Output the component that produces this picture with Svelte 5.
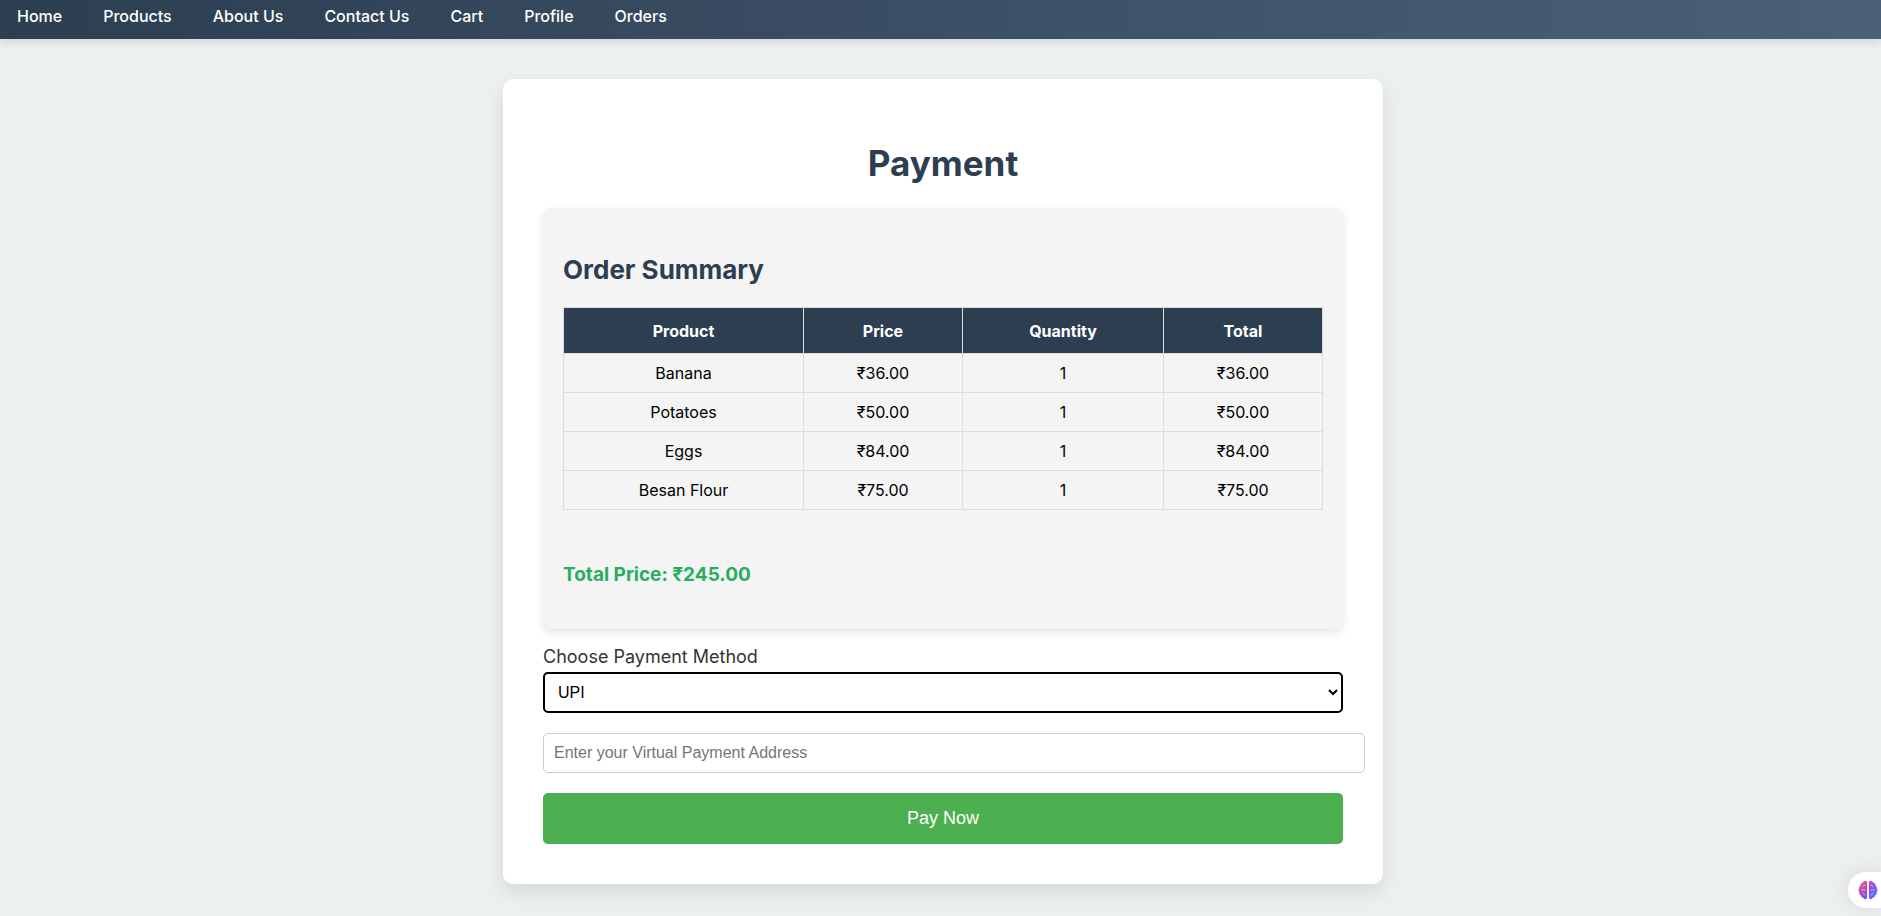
<script>
  const links = ['Home', 'Products', 'About Us', 'Contact Us', 'Cart', 'Profile', 'Orders'];

  const items = [
    { name: 'Banana', price: 36, quantity: 1 },
    { name: 'Potatoes', price: 50, quantity: 1 },
    { name: 'Eggs', price: 84, quantity: 1 },
    { name: 'Besan Flour', price: 75, quantity: 1 }
  ];

  const total = items.reduce((sum, item) => sum + item.price * item.quantity, 0);
  const rupees = (value) => `₹${value.toFixed(2)}`;

  let method = $state('upi');
  let address = $state('');
</script>

<div class="page">
  <nav class="navbar">
    {#each links as link}
      <a href="#{link.toLowerCase().replace(' ', '-')}">{link}</a>
    {/each}
  </nav>

  <main>
    <form class="card" onsubmit={(event) => event.preventDefault()}>
      <h1>Payment</h1>

      <section class="summary">
        <h2>Order Summary</h2>
        <table>
          <colgroup>
            <col class="wide" />
            <col class="narrow" />
            <col class="medium" />
            <col class="narrow" />
          </colgroup>
          <thead>
            <tr><th>Product</th><th>Price</th><th>Quantity</th><th>Total</th></tr>
          </thead>
          <tbody>
            {#each items as item}
              <tr>
                <td>{item.name}</td>
                <td>{rupees(item.price)}</td>
                <td>{item.quantity}</td>
                <td>{rupees(item.price * item.quantity)}</td>
              </tr>
            {/each}
          </tbody>
        </table>
        <h3>Total Price: {rupees(total)}</h3>
      </section>

      <label for="method">Choose Payment Method</label>
      <select id="method" bind:value={method}>
        <option value="upi">UPI</option>
      </select>
      <input type="text" aria-label="Virtual Payment Address" placeholder="Enter your Virtual Payment Address" bind:value={address} />
      <button class="pay" type="submit">Pay Now</button>
    </form>
  </main>

  <button class="assistant" type="button" aria-label="Assistant">
    <svg viewBox="0 0 20 20" width="20" height="20" aria-hidden="true">
      <defs>
        <linearGradient id="brain-left" x1="0" y1="0" x2="0.4" y2="1">
          <stop offset="0" stop-color="#ff8a3c" />
          <stop offset="0.4" stop-color="#e24a9a" />
          <stop offset="1" stop-color="#7a4cf0" />
        </linearGradient>
        <linearGradient id="brain-right" x1="0" y1="0" x2="0.6" y2="1">
          <stop offset="0" stop-color="#d44fc0" />
          <stop offset="0.5" stop-color="#8a50ee" />
          <stop offset="1" stop-color="#2f86ff" />
        </linearGradient>
      </defs>
      <path
        fill="url(#brain-left)"
        d="M9.100 2.600C9.100 1.400 8.400.8 7.300.8 6.100.8 5.300 1.500 5 2.500 3.500 2.600 2.600 3.700 2.700 5.200 1.500 5.800 1 7 1.400 8.100.2 9.200.2 11 1.300 12c-.5 1.500.2 2.900 1.600 3.300.1 1.500 1.100 2.500 2.400 2.500.4 1 1.200 1.500 2.100 1.400 1.100-.1 1.700-.9 1.700-2.100z"
      />
      <path
        fill="url(#brain-right)"
        d="M10.900 2.600C10.900 1.400 11.600.8 12.700.8 13.900.8 14.700 1.500 15 2.500 16.500 2.600 17.400 3.700 17.300 5.200 18.500 5.800 19 7 18.600 8.100 19.800 9.200 19.800 11 18.700 12c.5 1.500-.2 2.900-1.600 3.300-.1 1.500-1.100 2.500-2.400 2.500-.4 1-1.200 1.500-2.100 1.400-1.100-.1-1.700-.9-1.700-2.100z"
      />
      <path
        fill="none"
        stroke="#fff"
        stroke-opacity="0.6"
        stroke-linecap="round"
        d="M3.500 10H7M5 6.500 7 5M5 13.500 7 15M16.500 10H13M15 6.500 13 5M15 13.500 13 15"
      />
    </svg>
  </button>
</div>

<style>
  :global(body) {
    background: #ecf0f1;
  }

  .page {
    min-height: 100vh;
    background: #ecf0f1;
    color: #000;
    font-family: Inter, 'Open Sans', sans-serif;
    font-size: 16px;
    line-height: 24px;
  }

  .navbar {
    display: flex;
    gap: 41px;
    height: 39px;
    box-sizing: border-box;
    padding: 4px 17px 0;
    background: linear-gradient(90deg, #2c3e50, #4b6079);
    box-shadow: 0 4px 8px rgba(0, 0, 0, 0.1);
  }

  .navbar a {
    color: #fff;
    font-weight: 500;
    text-decoration: none;
  }

  main {
    padding: 40px 0 32px 5px;
  }

  .card {
    box-sizing: border-box;
    width: 880px;
    max-width: 100%;
    margin: 0 auto;
    padding: 40px;
    border-radius: 10px;
    background: #fff;
    box-shadow: 0 8px 20px rgba(0, 0, 0, 0.1);
  }

  h1 {
    margin: 20px 0;
    color: #2c3e50;
    font-size: 35px;
    line-height: 49px;
    text-align: center;
  }

  .summary {
    margin-bottom: 14px;
    padding: 20px;
    border-radius: 8px;
    background: #f4f4f4;
    box-shadow: 0 4px 8px rgba(0, 0, 0, 0.1);
  }

  h2 {
    margin: 24px 0 19px;
    color: #2c3e50;
    font-size: 26px;
    line-height: 36px;
  }

  table {
    width: 100%;
    border-collapse: collapse;
    table-layout: fixed;
    text-align: center;
  }

  .wide {
    width: 240px;
  }

  .medium {
    width: 201px;
  }

  .narrow {
    width: 159px;
  }

  th,
  td {
    padding: 7px;
    border: 1px solid #ddd;
  }

  th {
    padding: 11px 10px 10px;
    background: #2c3e50;
    color: #fff;
    font-weight: 700;
  }

  h3 {
    margin: 50px 0 19px;
    color: #27ae60;
    font-size: 19px;
    line-height: 30px;
  }

  label {
    display: block;
    margin-bottom: 2px;
    color: #333;
    font-size: 18px;
    line-height: 27px;
  }

  select,
  input,
  .pay {
    display: block;
    border-radius: 5px;
    font-family: 'Liberation Sans', Arial, sans-serif;
    font-size: 16px;
  }

  select {
    width: 100%;
    height: 41px;
    margin-bottom: 20px;
    padding: 0 9px;
    border: 2px solid #000;
    background: #fff;
    color: #000;
    outline: none;
  }

  input {
    box-sizing: content-box;
    width: 100%;
    height: 18px;
    margin-bottom: 20px;
    padding: 10px;
    border: 1px solid #ccc;
    background: #fff;
  }

  input::placeholder {
    color: #757575;
  }

  .pay {
    width: 100%;
    padding: 15px;
    border: 0;
    background: #4caf50;
    color: #fff;
    font-size: 18px;
    line-height: 21px;
  }

  .assistant {
    position: fixed;
    right: 0;
    bottom: 8px;
    display: flex;
    align-items: center;
    padding: 8px 3px 8px 10px;
    border: 0;
    border-radius: 18px 0 0 18px;
    background: #fff;
    box-shadow: 0 0 20px rgba(0, 0, 0, 0.1);
  }
</style>
